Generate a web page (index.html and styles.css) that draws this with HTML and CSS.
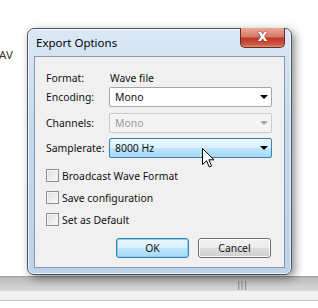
FILE: index.html
```html
<!DOCTYPE html>
<html lang="en">
<head>
    <meta charset="UTF-8">
    <title>Export Options</title>
    <link rel="stylesheet" href="styles.css">
</head>
<body>
    <div class="desktop">
        <div class="app-text">AV</div>
        <div class="hscroll"><span class="grip">|||</span></div>
        <div class="status"></div>
    </div>

    <div class="dialog">
        <div class="titlebar">
            <span class="title">Export Options</span>
            <div class="close-btn"><span>x</span></div>
        </div>
        <div class="client">
            <div class="fields">
                <div class="row row-info">
                    <span class="label">Format:</span>
                    <span class="value">Wave file</span>
                </div>
                <div class="row">
                    <span class="label">Encoding:</span>
                    <div class="combo"><span>Mono</span><i class="arrow"></i></div>
                </div>
                <div class="row row-gap6">
                    <span class="label">Channels:</span>
                    <div class="combo disabled"><span>Mono</span><i class="arrow"></i></div>
                </div>
                <div class="row row-gap5">
                    <span class="label">Samplerate:</span>
                    <div class="combo hot"><span>8000 Hz</span><i class="arrow"></i></div>
                </div>
            </div>

            <div class="checks">
                <label class="check"><span class="box"></span>Broadcast Wave Format</label>
                <label class="check"><span class="box"></span>Save configuration</label>
                <label class="check"><span class="box"></span>Set as Default</label>
            </div>

            <div class="buttons">
                <div class="btn default">OK</div>
                <div class="btn">Cancel</div>
            </div>
        </div>
    </div>

    <svg class="cursor" width="13" height="20" viewBox="0 0 13 20">
        <path d="M0.5 0.5 L0.5 16.5 L4.5 12.8 L7.3 19 L9.6 18 L6.9 11.8 L12 11.8 Z" fill="#fff" stroke="#000" stroke-width="1"/>
    </svg>
</body>
</html>
```

FILE: styles.css
```css
body {
    margin: 0;
    font-family: 'Noto Sans', 'Open Sans', sans-serif;
    font-size: 10.4px;
    color: #111;
    background: #fff;
}
.desktop {
    width: 318px;
    height: 308px;
    display: flex;
    flex-direction: column;
    overflow: hidden;
}
.app-text {
    padding-top: 47px;
    margin-left: -1px;
    font-size: 11.5px;
    color: #333;
}
.hscroll {
    margin-top: auto;
    height: 14px;
    border-top: 1px solid #a0a0a0;
    background: linear-gradient(#b9b9b9, #dadada);
    display: flex;
    justify-content: center;
    align-items: center;
    padding-left: 165px;
    font-size: 8px;
    color: #555;
    letter-spacing: -1px;
}
.status {
    height: 9px;
    background: #f2f2f2;
    border-bottom: 1px solid #c6c6c6;
    margin-bottom: 7px;
}

/* dialog window */
.dialog {
    position: absolute;
    left: 27px;
    top: 28px;
    width: 251px;
    height: 239px;
    padding: 0 6px 6px 6px;
    border: 1px solid #4a5360;
    border-radius: 7px;
    background: linear-gradient(#dbe8f6, #c4d8ee 40%, #bcd3ec);
    box-shadow: inset 0 0 0 1px rgba(255,255,255,0.7), 3px 3px 10px rgba(0,0,0,0.45);
    display: flex;
    flex-direction: column;
}
.titlebar {
    height: 27px;
    flex-shrink: 0;
    display: flex;
    align-items: center;
    padding-left: 2px;
}
.title {
    font-size: 11.5px;
    color: #000;
}
.close-btn {
    position: absolute;
    top: -1px;
    right: 6px;
    width: 43px;
    height: 19px;
    border: 1px solid #6b2a24;
    border-top: none;
    border-radius: 0 0 5px 5px;
    background: linear-gradient(#e9a99b, #d77a68 45%, #c0392b 55%, #c8553f 85%, #e48d72);
    display: flex;
    justify-content: center;
    align-items: center;
}
.close-btn span {
    font-family: 'DejaVu Sans', sans-serif;
    font-weight: bold;
    font-size: 15px;
    line-height: 1;
    margin-top: -3px;
    color: #fff;
    text-shadow: 0 0 1px #5a1a12, 0 0 1px #5a1a12;
}
.client {
    flex: 1;
    border: 1px solid #8898ab;
    background: #f0f0f0;
    padding: 10px 12px 9px 11px;
    display: flex;
    flex-direction: column;
}

/* fields */
.fields {
    display: flex;
    flex-direction: column;
}
.row {
    height: 20px;
    display: flex;
    align-items: center;
}
.row-info {
    padding-top: 2px;
    box-sizing: border-box;
}
.row-gap6 {
    margin-top: 6px;
}
.row-gap5 {
    margin-top: 5px;
}
.label {
    width: 63px;
    flex-shrink: 0;
}
.value {
    padding-left: 1px;
}
.combo {
    width: 156px;
    height: 18px;
    border: 1px solid #a5a5a5;
    border-radius: 2px;
    background: #fff;
    display: flex;
    align-items: center;
    padding-left: 5px;
}
.combo span {
    flex: 1;
}
.arrow {
    width: 0;
    height: 0;
    border-left: 4px solid transparent;
    border-right: 4px solid transparent;
    border-top: 4px solid #000;
    margin-right: 3px;
}
.combo.disabled {
    background: #f4f4f4;
    border-color: #c9c9c9;
    color: #9a9a9a;
}
.combo.disabled .arrow {
    border-top-color: #a8a8a8;
}
.combo.hot {
    border-color: #3c7fb1;
    background: linear-gradient(#eaf6fd, #d9f0fc 50%, #bee6fd 51%, #a7d9f5);
}

/* checkboxes */
.checks {
    margin-top: 11px;
    display: flex;
    flex-direction: column;
    gap: 9px;
}
.check {
    height: 13px;
    display: flex;
    align-items: center;
    gap: 3px;
}
.box {
    width: 11px;
    height: 11px;
    border: 1px solid #8e8f8f;
    background: linear-gradient(135deg, #dcdcdc, #fbfbfb);
    box-shadow: inset 0 0 0 1px #f4f4f4;
}

/* buttons */
.buttons {
    margin-top: auto;
    display: flex;
    justify-content: flex-end;
    gap: 9px;
    padding-right: 1px;
}
.btn {
    width: 71px;
    height: 18px;
    border: 1px solid #707070;
    border-radius: 3px;
    background: linear-gradient(#f2f2f2, #ebebeb 50%, #dddddd 51%, #cfcfcf);
    box-shadow: inset 0 0 0 1px rgba(255,255,255,0.8);
    display: flex;
    justify-content: center;
    align-items: center;
}
.btn.default {
    border-color: #3c7fb1;
    background: linear-gradient(#eaf6fd, #d9f0fc 50%, #bee6fd 51%, #a7d9f5);
    box-shadow: inset 0 0 0 1px #7fd4f5;
}

.cursor {
    position: absolute;
    left: 202px;
    top: 148px;
}
```
